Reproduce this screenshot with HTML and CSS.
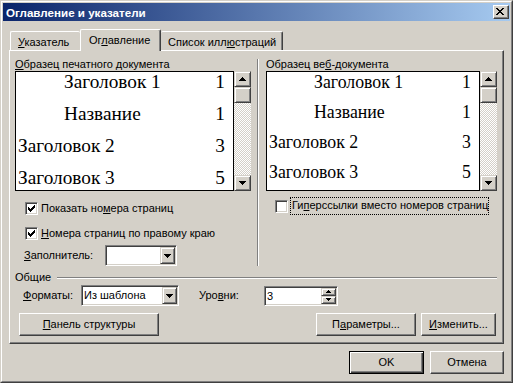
FILE: index.html
```html
<!DOCTYPE html>
<html lang="ru">
<head>
<meta charset="utf-8">
<title>Оглавление и указатели</title>
<link rel="stylesheet" href="styles.css">
</head>
<body>
<div class="window">
  <div class="frame">
    <div class="titlebar">
      <span class="title">Оглавление и указатели</span>
      <div class="close">
        <svg width="8" height="7" viewBox="0 0 8 7" shape-rendering="crispEdges"><path d="M0 0h2v1h-2zM6 0h2v1h-2zM1 1h2v1h-2zM5 1h2v1h-2zM2 2h4v1h-4zM3 3h2v1h-2zM2 4h4v1h-4zM1 5h2v1h-2zM5 5h2v1h-2zM0 6h2v1h-2zM6 6h2v1h-2z" fill="#000"/></svg>
      </div>
    </div>
    <div class="body">
      <div class="tabs">
        <div class="tab tab-first"><u>У</u>казатель</div>
        <div class="tab tab-active">Ог<u>л</u>авление</div>
        <div class="tab tab-last">Список илл<u>ю</u>страций</div>
      </div>
      <div class="panel">
        <div class="top">
          <div class="col col-left">
            <div class="label"><u>О</u>бразец печатного документа</div>
            <div class="preview-row">
              <div class="preview preview-print">
                <div class="toc-row ind"><span>Заголовок 1</span><span>1</span></div>
                <div class="toc-row ind"><span>Название</span><span>1</span></div>
                <div class="toc-row"><span>Заголовок 2</span><span>3</span></div>
                <div class="toc-row"><span>Заголовок 3</span><span>5</span></div>
              </div>
              <div class="scrollbar">
                <div class="sb-btn"><svg width="7" height="4" viewBox="0 0 7 4" shape-rendering="crispEdges"><path d="M3 0h1v1h-1zM2 1h3v1h-3zM1 2h5v1h-5zM0 3h7v1h-7z" fill="#000"/></svg></div>
                <div class="sb-thumb"></div>
                <div class="sb-track"></div>
                <div class="sb-btn"><svg width="7" height="4" viewBox="0 0 7 4" shape-rendering="crispEdges"><path d="M0 0h7v1h-7zM1 1h5v1h-5zM2 2h3v1h-3zM3 3h1v1h-1z" fill="#000"/></svg></div>
              </div>
            </div>
            <div class="cb-row cb-first">
              <span class="checkbox"><svg width="7" height="7" viewBox="0 0 7 7" shape-rendering="crispEdges"><path d="M6 0h1v1h-1zM5 1h2v1h-2zM0 2h1v1h-1zM4 2h3v1h-3zM0 3h2v1h-2zM3 3h3v1h-3zM0 4h5v1h-5zM1 5h3v1h-3zM2 6h1v1h-1z" fill="#000"/></svg></span>
              <span class="cb-label">Показать но<u>м</u>ера страниц</span>
            </div>
            <div class="cb-row cb-second">
              <span class="checkbox"><svg width="7" height="7" viewBox="0 0 7 7" shape-rendering="crispEdges"><path d="M6 0h1v1h-1zM5 1h2v1h-2zM0 2h1v1h-1zM4 2h3v1h-3zM0 3h2v1h-2zM3 3h3v1h-3zM0 4h5v1h-5zM1 5h3v1h-3zM2 6h1v1h-1z" fill="#000"/></svg></span>
              <span class="cb-label"><u>Н</u>омера страниц по правому краю</span>
            </div>
            <div class="fill-row">
              <span class="fill-label"><u>З</u>аполнитель:</span>
              <div class="combo combo-fill">
                <span class="combo-text"></span>
                <span class="combo-btn"><svg width="7" height="4" viewBox="0 0 7 4" shape-rendering="crispEdges"><path d="M0 0h7v1h-7zM1 1h5v1h-5zM2 2h3v1h-3zM3 3h1v1h-1z" fill="#000"/></svg></span>
              </div>
            </div>
          </div>
          <div class="vsep"></div>
          <div class="col col-right">
            <div class="label">Образец ве<u>б</u>-документа</div>
            <div class="preview-row">
              <div class="preview preview-web">
                <div class="toc-row ind"><span>Заголовок 1</span><span>1</span></div>
                <div class="toc-row ind"><span>Название</span><span>1</span></div>
                <div class="toc-row"><span>Заголовок 2</span><span>3</span></div>
                <div class="toc-row"><span>Заголовок 3</span><span>5</span></div>
              </div>
              <div class="scrollbar">
                <div class="sb-btn"><svg width="7" height="4" viewBox="0 0 7 4" shape-rendering="crispEdges"><path d="M3 0h1v1h-1zM2 1h3v1h-3zM1 2h5v1h-5zM0 3h7v1h-7z" fill="#000"/></svg></div>
                <div class="sb-thumb"></div>
                <div class="sb-track"></div>
                <div class="sb-btn"><svg width="7" height="4" viewBox="0 0 7 4" shape-rendering="crispEdges"><path d="M0 0h7v1h-7zM1 1h5v1h-5zM2 2h3v1h-3zM3 3h1v1h-1z" fill="#000"/></svg></div>
              </div>
            </div>
            <div class="cb-row-focus">
              <span class="checkbox"></span>
              <span class="focus-label">Ги<u>п</u>ерссылки вместо номеров страниц</span>
            </div>
          </div>
        </div>
        <div class="group">
          <span>Общие</span>
          <span class="hline"></span>
        </div>
        <div class="formats-row">
          <span class="formats-label"><u>Ф</u>орматы:</span>
          <div class="combo combo-formats">
            <span class="combo-text">Из шаблона</span>
            <span class="combo-btn"><svg width="7" height="4" viewBox="0 0 7 4" shape-rendering="crispEdges"><path d="M0 0h7v1h-7zM1 1h5v1h-5zM2 2h3v1h-3zM3 3h1v1h-1z" fill="#000"/></svg></span>
          </div>
          <span class="levels-label">Уро<u>в</u>ни:</span>
          <div class="spin">
            <span class="spin-text">3</span>
            <span class="spin-btns">
              <span class="spin-btn"><svg width="5" height="3" viewBox="0 0 5 3" shape-rendering="crispEdges"><path d="M2 0h1v1h-1zM1 1h3v1h-3zM0 2h5v1h-5z" fill="#000"/></svg></span>
              <span class="spin-btn"><svg width="5" height="3" viewBox="0 0 5 3" shape-rendering="crispEdges"><path d="M0 0h5v1h-5zM1 1h3v1h-3zM2 2h1v1h-1z" fill="#000"/></svg></span>
            </span>
          </div>
        </div>
        <div class="buttons-row">
          <div class="btn btn-outline"><u>П</u>анель структуры</div>
          <div class="spacer"></div>
          <div class="btn btn-params">П<u>а</u>раметры...</div>
          <div class="btn btn-modify"><u>И</u>зменить...</div>
        </div>
      </div>
      <div class="dialog-buttons">
        <div class="btn btn-default">OK</div>
        <div class="btn btn-cancel">Отмена</div>
      </div>
    </div>
  </div>
</div>
</body>
</html>
```

FILE: styles.css
```css
html, body {
  margin: 0;
  padding: 0;
  background: #D4D0C8;
}

body {
  font-family: "Liberation Sans", Arial, sans-serif;
  font-size: 11px;
  line-height: 13px;
  color: #000;
}

u {
  text-decoration: underline;
  text-underline-offset: 1px;
}

.window {
  width: 513px;
  height: 383px;
  box-sizing: border-box;
  border: 1px solid;
  border-color: #D4D0C8 #404040 #404040 #D4D0C8;
  background: #D4D0C8;
}

.frame {
  height: 100%;
  box-sizing: border-box;
  border: 1px solid;
  border-color: #FFFFFF #808080 #808080 #FFFFFF;
  padding: 1px;
  display: flex;
  flex-direction: column;
}

.titlebar {
  height: 18px;
  flex: none;
  display: flex;
  align-items: center;
  padding: 0 1px 0 3px;
  background: linear-gradient(to right, #0A246A, #A6CAF0);
}

.title {
  flex: 1;
  color: #fff;
  font-weight: bold;
  font-size: 11.6px;
  white-space: nowrap;
}

.close {
  width: 16px;
  height: 14px;
  box-sizing: border-box;
  border: 1px solid;
  border-color: #FFFFFF #404040 #404040 #FFFFFF;
  box-shadow: inset -1px -1px 0 #808080;
  background: #D4D0C8;
  padding: 2px 0 0 2px;
  display: flex;
  align-items: flex-start;
}

.close svg {
  display: block;
}

.body {
  flex: 1;
  padding: 0 6px;
  display: flex;
  flex-direction: column;
}

/* Tabs */
.tabs {
  margin-top: 8px;
  height: 21px;
  flex: none;
  display: flex;
  align-items: flex-end;
  padding-left: 1px;
}

.tab {
  box-sizing: border-box;
  height: 19px;
  padding: 4px 0 0 7px;
  border-top: 1px solid #fff;
  border-radius: 2px 2px 0 0;
  background: #D4D0C8;
  white-space: nowrap;
}

.tab-first {
  width: 70px;
  border-left: 1px solid #fff;
}

.tab-active {
  width: 81px;
  height: 22px;
  margin-bottom: -1px;
  padding-left: 8px;
  border-left: 1px solid #fff;
  border-right: 1px solid #404040;
  box-shadow: inset -1px 0 0 #808080;
  position: relative;
  z-index: 1;
}

.tab-last {
  width: 122px;
  border-right: 1px solid #404040;
  box-shadow: inset -1px 0 0 #808080;
}

/* Panel */
.panel {
  height: 294px;
  flex: none;
  box-sizing: border-box;
  border: 1px solid;
  border-color: #FFFFFF #404040 #404040 #FFFFFF;
  box-shadow: inset -1px -1px 0 #808080;
  padding: 7px 6px 0 5px;
  display: flex;
  flex-direction: column;
}

.top {
  display: flex;
}

.col {
  display: flex;
  flex-direction: column;
}

.col-left {
  width: 236px;
}

.col-right {
  width: 231px;
}

.vsep {
  width: 2px;
  box-sizing: border-box;
  border-left: 1px solid #808080;
  border-right: 1px solid #fff;
  margin: 1px 7px 0 6px;
}

.label {
  height: 13px;
  white-space: nowrap;
}

.preview-row {
  display: flex;
  height: 120px;
}

.preview {
  flex: 1;
  box-sizing: border-box;
  border: 1px solid #000;
  background: #fff;
  font-family: "Liberation Serif", "Times New Roman", serif;
  display: flex;
  flex-direction: column;
  padding: 0 8px 0 2px;
  overflow: hidden;
}

.toc-row {
  display: flex;
  justify-content: space-between;
  line-height: 20px;
  white-space: nowrap;
}

.preview-print {
  gap: 12px;
  font-size: 19.3px;
}

.preview-print .ind {
  padding-left: 46px;
}

.preview-web {
  gap: 10px;
  font-size: 17.8px;
}

.preview-web .ind {
  padding-left: 45px;
}

.scrollbar {
  width: 17px;
  display: flex;
  flex-direction: column;
}

.sb-btn,
.sb-thumb {
  height: 16px;
  flex: none;
  box-sizing: border-box;
  border: 1px solid;
  border-color: #D4D0C8 #404040 #404040 #D4D0C8;
  box-shadow: inset 1px 1px 0 #fff, inset -1px -1px 0 #808080;
  background: #D4D0C8;
  display: flex;
  align-items: center;
  justify-content: center;
}

.sb-btn svg {
  display: block;
}

.sb-track {
  flex: 1;
  background-color: #E8E6E1;
  background-image: repeating-conic-gradient(#fff 0 25%, #D4D0C8 0 50%);
  background-size: 2px 2px;
}

/* Checkboxes */
.checkbox {
  width: 13px;
  height: 13px;
  flex: none;
  box-sizing: border-box;
  border: 1px solid;
  border-color: #808080 #FFFFFF #FFFFFF #808080;
  box-shadow: inset 1px 1px 0 #404040, inset -1px -1px 0 #D4D0C8;
  background: #fff;
  display: flex;
  align-items: center;
  justify-content: center;
}

.checkbox svg {
  display: block;
}

.cb-row {
  display: flex;
  align-items: center;
  height: 13px;
  white-space: nowrap;
}

.cb-row .checkbox {
  margin-left: 10px;
}

.cb-label {
  margin-left: 3px;
}

.cb-first {
  margin-top: 11px;
}

.cb-second {
  margin-top: 12px;
}

.cb-row-focus {
  margin-top: 6px;
  display: flex;
  align-items: center;
  white-space: nowrap;
}

.cb-row-focus .checkbox {
  margin-left: 9px;
}

.focus-label {
  margin-left: 2px;
  border: 1px dotted #000;
  padding: 1px 0 2px 1px;
}

/* Combos */
.fill-row {
  margin-top: 5px;
  height: 21px;
  display: flex;
  align-items: center;
}

.fill-label {
  margin-left: 9px;
  width: 81px;
  white-space: nowrap;
}

.combo {
  height: 21px;
  box-sizing: border-box;
  border: 1px solid;
  border-color: #808080 #FFFFFF #FFFFFF #808080;
  box-shadow: inset 1px 1px 0 #404040, inset -1px -1px 0 #D4D0C8;
  background: #fff;
  padding: 1px;
  display: flex;
}

.combo-fill {
  width: 72px;
}

.combo-formats {
  width: 98px;
}

.combo-text {
  flex: 1;
  line-height: 17px;
  padding-left: 1px;
  white-space: nowrap;
}

.combo-btn {
  width: 15px;
  height: 17px;
  box-sizing: border-box;
  border: 1px solid;
  border-color: #D4D0C8 #404040 #404040 #D4D0C8;
  box-shadow: inset 1px 1px 0 #fff, inset -1px -1px 0 #808080;
  background: #D4D0C8;
  display: flex;
  align-items: center;
  justify-content: center;
}

.combo-btn svg {
  display: block;
}

/* Group */
.group {
  margin-top: 5px;
  height: 13px;
  display: flex;
  align-items: flex-start;
}

.hline {
  flex: 1;
  margin: 6px 0 0 6px;
  border-top: 1px solid #808080;
  border-bottom: 1px solid #fff;
}

.formats-row {
  margin-top: 1px;
  height: 21px;
  display: flex;
  align-items: center;
}

.formats-label {
  margin-left: 8px;
  width: 58px;
  white-space: nowrap;
}

.levels-label {
  margin-left: 20px;
  width: 65px;
  white-space: nowrap;
}

.spin {
  width: 74px;
  height: 20px;
  box-sizing: border-box;
  border: 1px solid;
  border-color: #808080 #FFFFFF #FFFFFF #808080;
  box-shadow: inset 1px 1px 0 #404040, inset -1px -1px 0 #D4D0C8;
  background: #fff;
  padding: 1px;
  display: flex;
}

.spin-text {
  flex: 1;
  line-height: 16px;
  padding-left: 1px;
}

.spin-btns {
  width: 15px;
  display: flex;
  flex-direction: column;
}

.spin-btn {
  height: 8px;
  box-sizing: border-box;
  border: 1px solid;
  border-color: #D4D0C8 #404040 #404040 #D4D0C8;
  box-shadow: inset 1px 1px 0 #fff, inset -1px -1px 0 #808080;
  background: #D4D0C8;
  display: flex;
  align-items: center;
  justify-content: center;
}

.spin-btn svg {
  display: block;
}

/* Buttons */
.buttons-row {
  margin-top: 7px;
  height: 23px;
  display: flex;
}

.spacer {
  flex: 1;
}

.btn {
  height: 23px;
  box-sizing: border-box;
  border: 1px solid;
  border-color: #FFFFFF #404040 #404040 #FFFFFF;
  box-shadow: inset -1px -1px 0 #808080;
  background: #D4D0C8;
  display: flex;
  align-items: center;
  justify-content: center;
  white-space: nowrap;
}

.btn-outline {
  margin-left: 4px;
  width: 140px;
}

.btn-params {
  width: 100px;
}

.btn-modify {
  margin-left: 5px;
  margin-right: 1px;
  width: 75px;
}

.dialog-buttons {
  margin-top: 7px;
  display: flex;
  justify-content: flex-end;
  gap: 6px;
}

.btn-default {
  width: 75px;
  border: 1px solid #000;
  box-shadow: inset 1px 1px 0 #fff, inset -1px -1px 0 #404040, inset -2px -2px 0 #808080;
}

.btn-cancel {
  width: 74px;
}
```
